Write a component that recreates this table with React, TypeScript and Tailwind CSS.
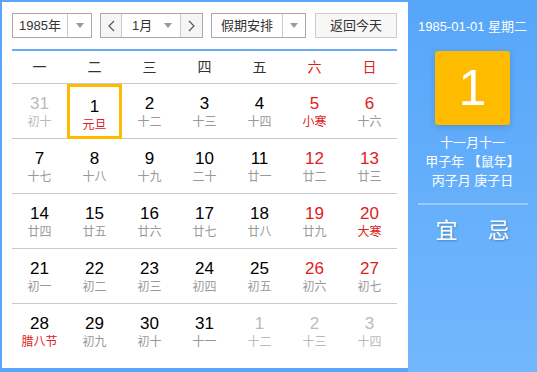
import React from 'react';

type Day = { d: number; l: string; other?: boolean; fest?: boolean };

const weeks: Day[][] = [
  [
    { d: 31, l: '初十', other: true },
    { d: 1, l: '元旦', fest: true },
    { d: 2, l: '十二' },
    { d: 3, l: '十三' },
    { d: 4, l: '十四' },
    { d: 5, l: '小寒', fest: true },
    { d: 6, l: '十六' },
  ],
  [
    { d: 7, l: '十七' },
    { d: 8, l: '十八' },
    { d: 9, l: '十九' },
    { d: 10, l: '二十' },
    { d: 11, l: '廿一' },
    { d: 12, l: '廿二' },
    { d: 13, l: '廿三' },
  ],
  [
    { d: 14, l: '廿四' },
    { d: 15, l: '廿五' },
    { d: 16, l: '廿六' },
    { d: 17, l: '廿七' },
    { d: 18, l: '廿八' },
    { d: 19, l: '廿九' },
    { d: 20, l: '大寒', fest: true },
  ],
  [
    { d: 21, l: '初一' },
    { d: 22, l: '初二' },
    { d: 23, l: '初三' },
    { d: 24, l: '初四' },
    { d: 25, l: '初五' },
    { d: 26, l: '初六' },
    { d: 27, l: '初七' },
  ],
  [
    { d: 28, l: '腊八节', fest: true },
    { d: 29, l: '初九' },
    { d: 30, l: '初十' },
    { d: 31, l: '十一' },
    { d: 1, l: '十二', other: true },
    { d: 2, l: '十三', other: true },
    { d: 3, l: '十四', other: true },
  ],
];

const weekdays = ['一', '二', '三', '四', '五', '六', '日'];

function Caret() {
  return <span className="w-0 h-0 border-l-[4px] border-r-[4px] border-t-[5px] border-l-transparent border-r-transparent border-t-[#999]" />;
}

function Chevron({ dir }: { dir: 'l' | 'r' }) {
  return (
    <svg width="7" height="12" viewBox="0 0 7 12" fill="none" stroke="#555" strokeWidth="1.2">
      {dir === 'l' ? <path d="M6 1 1 6l5 5" /> : <path d="M1 1l5 5-5 5" />}
    </svg>
  );
}

export default function App() {
  return (
    <div
      className="w-[537px] h-[372px] bg-[#5aa6f8] pt-[2px] pl-[2px] pb-[4px] flex overflow-hidden"
      style={{ fontFamily: '"Liberation Sans", "Noto Sans CJK SC", sans-serif' }}
    >
      {/* calendar */}
      <div className="w-[406px] h-[366px] bg-white px-[10px] pt-[11px] flex flex-col">
        <div className="flex items-center h-[25px] text-[13px] text-[#333]">
          <div className="w-[80px] h-[25px] border border-[#a9a9a9] flex">
            <div className="w-[55px] flex items-center justify-center border-r border-[#ccc]">1985年</div>
            <div className="flex-1 flex items-center justify-center"><Caret /></div>
          </div>
          <div className="ml-[8px] w-[103px] h-[25px] border border-[#a9a9a9] flex">
            <div className="w-[21px] bg-[#f5f5f5] border-r border-[#ccc] flex items-center justify-center"><Chevron dir="l" /></div>
            <div className="flex-1 flex items-center justify-between pl-[10px] pr-[8px]">
              <span>1月</span>
              <Caret />
            </div>
            <div className="w-[22px] bg-[#f5f5f5] border-l border-[#ccc] flex items-center justify-center"><Chevron dir="r" /></div>
          </div>
          <div className="ml-[8px] w-[95px] h-[25px] border border-[#a9a9a9] flex">
            <div className="w-[71px] flex items-center justify-center border-r border-[#ccc]">假期安排</div>
            <div className="flex-1 flex items-center justify-center"><Caret /></div>
          </div>
          <div className="ml-[9px] w-[82px] h-[25px] border border-[#ccc] bg-[#f7f7f7] flex items-center justify-center">返回今天</div>
        </div>

        <div className="mt-[11px] h-[2px] bg-[#6aaaf0] mr-[1px]" />

        <div className="grid grid-cols-7 h-[33px] items-center border-b border-[#c8c8c8] text-[14px] mr-[1px]">
          {weekdays.map((w, i) => (
            <div key={w} className={`text-center ${i >= 5 ? 'text-[#e02020]' : 'text-[#333]'}`}>{w}</div>
          ))}
        </div>

        <div className="flex flex-col mr-[1px]">
          {weeks.map((week, wi) => (
            <div key={wi} className={`grid grid-cols-7 h-[55px] ${wi < 4 ? 'border-b border-[#c8c8c8]' : ''}`}>
              {week.map((day, di) => {
                const weekend = di >= 5;
                const selected = wi === 0 && di === 1;
                const numColor = day.other ? 'text-[#bbb]' : weekend ? 'text-[#e02020]' : 'text-black';
                const lunColor = day.other ? 'text-[#bbb]' : day.fest ? 'text-[#e02020]' : 'text-[#999]';
                return (
                  <div
                    key={di}
                    className={`flex flex-col items-center pt-[10px] ${selected ? 'border-[3px] border-[#ffbb00] pt-[7px] -mb-px' : ''}`}
                  >
                    <span className={`text-[17px] leading-[20px] ${numColor}`}>{day.d}</span>
                    <span className={`text-[12px] leading-[16px] ${lunColor}`}>{day.l}</span>
                  </div>
                );
              })}
            </div>
          ))}
        </div>
      </div>

      {/* side panel */}
      <div className="flex-1 h-[370px] -mb-[4px] bg-gradient-to-b from-[#56a6f9] to-[#72b7fd] flex flex-col items-center text-white">
        <div className="mt-[17px] text-[13px] leading-[16px]">1985-01-01 星期二</div>
        <div className="mt-[16px] w-[75px] h-[74px] rounded-[3px] bg-[#ffbb00] shadow-[0_2px_6px_rgba(0,0,0,0.15)] flex items-center justify-center text-[50px] leading-none">1</div>
        <div className="mt-[8px] text-[13px] leading-[19px] text-center">
          <div>十一月十一</div>
          <div>甲子年 【鼠年】</div>
          <div>丙子月 庚子日</div>
        </div>
        <div className="mt-[13px] w-[110px] h-[2px] bg-[#9ccbfb]" />
        <div className="mt-[12px] flex gap-[30px] text-[22px] leading-[28px] [text-shadow:1px_1px_2px_rgba(0,0,0,0.25)]">
          <span>宜</span>
          <span>忌</span>
        </div>
      </div>
    </div>
  );
}
